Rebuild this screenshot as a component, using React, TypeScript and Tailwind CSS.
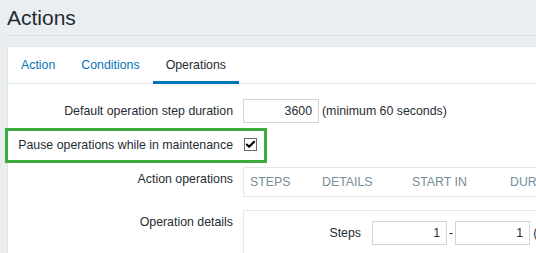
import { Check } from 'lucide-react';

const tabs = ['Action', 'Conditions', 'Operations'];

const columns = [
  { title: 'Steps', width: 'w-[72px]' },
  { title: 'Details', width: 'w-[90px]' },
  { title: 'Start in', width: 'w-[98px]' },
  { title: 'Duration', width: 'w-[90px]' },
  { title: 'Action', width: 'w-[90px]' },
];

function FormRow({ label, children, className = '' }: { label: string; children: React.ReactNode; className?: string }) {
  return (
    <div className={`relative flex items-start ${className}`}>
      <label className="w-[225px] shrink-0 pt-[5px] text-right leading-[14px]">{label}</label>
      <div className="ml-[10px] flex items-center">{children}</div>
    </div>
  );
}

export default function App() {
  return (
    <div className="h-[253px] w-[536px] overflow-hidden bg-[#ebeef1] pl-[7px] font-['Liberation_Sans',Arial,sans-serif] text-[12.35px] text-[#1f2c33]">
      {/* Header */}
      <h1 className="border-b border-[#dde2e5] pt-[6px] pb-[5px] text-[21px] leading-[24px]">Actions</h1>

      {/* Panel */}
      <div className="mt-[10px] w-[800px] border border-[#dfe4e7] bg-white">
        {/* Tabs */}
        <div className="flex border-b border-[#dfe4e7]">
          {tabs.map((tab) => (
            <div
              key={tab}
              className={`-mb-px flex h-[37px] items-center border-b-[3px] px-[13px] pt-[1px] leading-[14px] ${
                tab === 'Operations' ? 'border-[#0275b8] text-[#1f2c33]' : 'border-transparent text-[#0275b8]'
              }`}
            >
              {tab}
            </div>
          ))}
        </div>

        {/* Form */}
        <div className="flex flex-col pt-[15px] pb-[20px]">
          <FormRow label="Default operation step duration">
            <input
              readOnly
              value="3600"
              className="h-[24px] w-[76px] border border-[#cfd5d9] bg-white pr-[6px] text-right leading-[22px] text-[#1f2c33] outline-none"
            />
            <span className="ml-[3px] leading-[14px]">(minimum 60 seconds)</span>
          </FormRow>

          <FormRow label="Pause operations while in maintenance" className="mt-[10px] h-[24px]">
            <div className="mt-[5px] ml-[1px] flex h-[13px] w-[13px] items-center justify-center self-start border border-[#5f6a70] bg-white">
              <Check className="h-[11px] w-[11px] text-black" strokeWidth={4.5} />
            </div>
            <div className="pointer-events-none absolute left-[-3px] top-[-5px] h-[35px] w-[262px] border-[3px] border-[#3daa3d]" />
          </FormRow>

          <FormRow label="Action operations" className="mt-[10px]">
            <div className="flex h-[30px] w-[560px] items-center border border-[#e5e8ea] uppercase leading-[14px] text-[#768d99]">
              {columns.map((col) => (
                <div key={col.title} className={`${col.width} shrink-0 px-[6px]`}>
                  {col.title}
                </div>
              ))}
            </div>
          </FormRow>

          <FormRow label="Operation details" className="mt-[13px]">
            <div className="h-[60px] w-[560px] border border-[#e5e8ea] pt-[10px]">
              <div className="flex items-center">
                <span className="w-[117px] text-right leading-[14px]">Steps</span>
                <input
                  readOnly
                  value="1"
                  className="ml-[11px] h-[24px] w-[75px] border border-[#cfd5d9] bg-white pr-[6px] text-right leading-[22px] text-[#1f2c33] outline-none"
                />
                <span className="mx-[2px] leading-[14px]">-</span>
                <input
                  readOnly
                  value="1"
                  className="h-[24px] w-[75px] border border-[#cfd5d9] bg-white pr-[6px] text-right leading-[22px] text-[#1f2c33] outline-none"
                />
                <span className="ml-[3px] leading-[14px]">(0 - infinitely)</span>
              </div>
            </div>
          </FormRow>
        </div>
      </div>
    </div>
  );
}
